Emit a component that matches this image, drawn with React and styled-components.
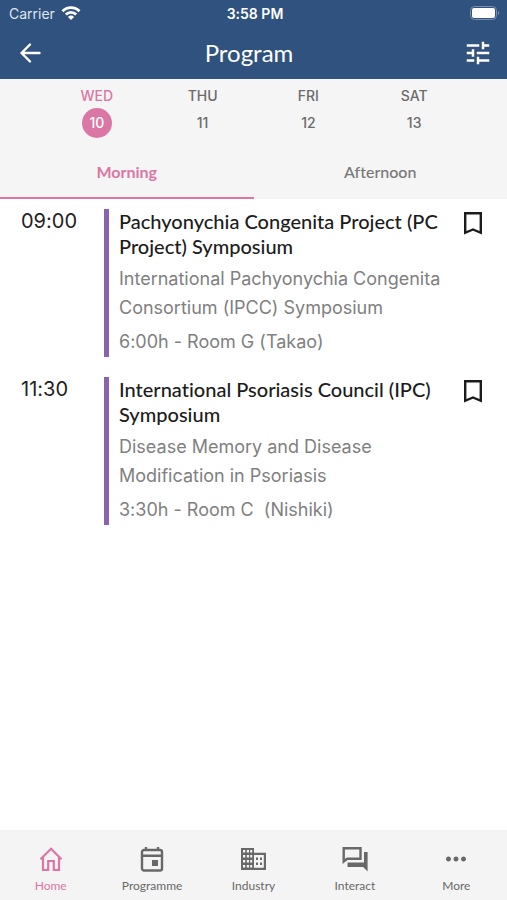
import React, { useState } from 'react';
import styled, { createGlobalStyle } from 'styled-components';
import { MdTune, MdMoreHoriz } from 'react-icons/md';

const days = [
  { name: 'WED', date: 10 },
  { name: 'THU', date: 11 },
  { name: 'FRI', date: 12 },
  { name: 'SAT', date: 13 },
];

const sessions = [
  {
    time: '09:00',
    title: 'Pachyonychia Congenita Project (PC Project) Symposium',
    description: 'International Pachyonychia Congenita Consortium (IPCC) Symposium',
    place: '6:00h - Room G (Takao)',
  },
  {
    time: '11:30',
    title: 'International Psoriasis Council (IPC) Symposium',
    description: 'Disease Memory and Disease Modification in Psoriasis',
    place: '3:30h - Room C  (Nishiki)',
  },
];

const WifiIcon = () => (
  <svg width="20" height="14" viewBox="0 0 20 14" fill="none" stroke="white" strokeWidth="2.8">
    <path d="M1.5 5.2a12 12 0 0 1 17 0M4.8 8.5a7.4 7.4 0 0 1 10.4 0" />
    <path d="M10 14l-3.1-3.1a4.4 4.4 0 0 1 6.2 0z" fill="white" stroke="none" />
  </svg>
);

const BatteryIcon = () => (
  <svg width="31" height="14" viewBox="0 0 31 14">
    <rect x="0.5" y="0.5" width="26" height="13" rx="4" fill="none" stroke="#7990b3" />
    <rect x="2" y="2" width="23" height="10" rx="2" fill="white" />
    <path d="M28 5c1.6.6 1.6 3.4 0 4z" fill="#7990b3" />
  </svg>
);

const BackIcon = () => (
  <svg
    width="24"
    height="24"
    viewBox="0 0 24 24"
    fill="none"
    stroke="currentColor"
    strokeWidth="2.4"
    strokeLinecap="round"
    strokeLinejoin="round"
  >
    <path d="M12 3.5L3.5 12l8.5 8.5M3.5 12h18" />
  </svg>
);

const BookmarkIcon = () => (
  <svg width="30" height="30" viewBox="0 0 30 30" fill="none" stroke="currentColor" strokeWidth="2.4">
    <path d="M7.2 4.2h15.6v19.6L15 20.5l-7.8 3.3z" />
  </svg>
);

const HomeIcon = () => (
  <svg width="28" height="28" viewBox="0 0 28 28" fill="none" stroke="currentColor" strokeWidth="2.2">
    <path d="M3.5 14.3L14 3.8l10.5 10.5M6 12v13h5.200v-9h5.6v9H22V12" />
  </svg>
);

const CalendarIcon = () => (
  <svg width="28" height="28" viewBox="0 0 28 28" fill="none" stroke="currentColor" strokeWidth="2.4">
    <rect x="4" y="5" width="20" height="20.5" rx="2" />
    <path d="M4 10.8h20M8 2v3M20 2v3" />
    <path d="M14 15h6v6h-6z" fill="currentColor" stroke="none" />
  </svg>
);

const BuildingIcon = () => (
  <svg width="28" height="28" viewBox="0 0 28 28" fill="currentColor" fillRule="evenodd">
    <path d="M2 3h13v4.7h12V25H2zM4 5v2.4h2.2V5zM7.8 5v2.4H10V5zM11.2 5v2.4h2V5zM4 10v2.4h2.2V10zM7.8 10v2.4H10V10zM11.2 10v2.4h2V10zM4 15v2.4h2.2V15zM7.8 15v2.4H10V15zM11.2 15v2.4h2V15zM4 20v2.4h2.2V20zM7.8 20v2.4H10V20zM11.2 20v2.4h2V20zM15 10v12.8h9.8V10z" />
    <path d="M17 12.5h2v2.500h-2zM21 12.5h2v2.500h-2zM17 17.5h2v2.500h-2zM21 17.5h2v2.500h-2z" />
  </svg>
);

const ChatIcon = () => (
  <svg width="28" height="28" viewBox="0 0 28 28" fill="none" stroke="currentColor" strokeWidth="2.4">
    <path d="M2.7 3.2h16.8v10.5H6.2l-3.5 2.8z" />
    <path d="M23 7h3.6v19.5L22.100 22H6.5v-4.5H23z" fill="currentColor" stroke="none" />
  </svg>
);

const links = [
  { label: 'Home', icon: <HomeIcon /> },
  { label: 'Programme', icon: <CalendarIcon /> },
  { label: 'Industry', icon: <BuildingIcon /> },
  { label: 'Interact', icon: <ChatIcon /> },
  { label: 'More', icon: <MdMoreHoriz size={30} /> },
];

const App = () => {
  const [day, setDay] = useState(10);
  const [period, setPeriod] = useState('Morning');

  return (
    <Page>
      <GlobalStyle />
      <Header>
        <StatusBar>
          <Carrier>
            Carrier <WifiIcon />
          </Carrier>
          <Clock>3:58 PM</Clock>
          <Battery>
            <BatteryIcon />
          </Battery>
        </StatusBar>
        <TitleBar>
          <IconButton aria-label="Back">
            <BackIcon />
          </IconButton>
          <Title>Program</Title>
          <IconButton aria-label="Filters">
            <MdTune size={30} />
          </IconButton>
        </TitleBar>
      </Header>
      <Filters>
        <Days>
          {days.map(({ name, date }) => (
            <Day key={date} $active={date === day} onClick={() => setDay(date)}>
              {name}
              <DayNumber $active={date === day}>{date}</DayNumber>
            </Day>
          ))}
        </Days>
        <Periods>
          {['Morning', 'Afternoon'].map(name => (
            <Period key={name} $active={name === period} onClick={() => setPeriod(name)}>
              {name}
            </Period>
          ))}
        </Periods>
      </Filters>
      <Sessions>
        {sessions.map(({ time, title, description, place }) => (
          <Session key={time}>
            <Time>{time}</Time>
            <Details>
              <SessionTitle>{title}</SessionTitle>
              <Description>{description}</Description>
              <Place>{place}</Place>
            </Details>
            <BookmarkButton aria-label="Bookmark">
              <BookmarkIcon />
            </BookmarkButton>
          </Session>
        ))}
      </Sessions>
      <BottomNav>
        {links.map(({ label, icon }) => (
          <NavLink key={label} href="#" $active={label === 'Home'}>
            <NavIcon>{icon}</NavIcon>
            {label}
          </NavLink>
        ))}
      </BottomNav>
    </Page>
  );
};

export default App;

const pink = '#db77a4';
const grey = '#6b6b6b';
const humanist = "Lato, 'Open Sans', sans-serif";

const GlobalStyle = createGlobalStyle`
  * {
    box-sizing: border-box;
  }

  body {
    margin: 0;
    background-color: white;
    font-family: Inter, 'Liberation Sans', sans-serif;
    font-variant-ligatures: none;
  }

  button {
    padding: 0;
    border: none;
    background: none;
    color: inherit;
    font: inherit;
    cursor: pointer;
  }
`;

const Page = styled.div`
  display: flex;
  flex-direction: column;
  min-height: 100vh;
`;

const Header = styled.header`
  background-color: #30527f;
  color: white;
`;

const StatusBar = styled.div`
  display: grid;
  grid-template-columns: 1fr auto 1fr;
  align-items: center;
  height: 26px;
  padding: 0 6px 0 9px;
  font-size: 14px;
`;

const Carrier = styled.div`
  display: flex;
  align-items: center;
  gap: 6px;
  color: #dfe6f0;
`;

const Clock = styled.div`
  font-weight: 600;
`;

const Battery = styled.div`
  display: flex;
  justify-content: flex-end;
`;

const TitleBar = styled.div`
  display: grid;
  grid-template-columns: 30px 1fr 40px;
  align-items: center;
  height: 53px;
  padding: 0 14px 0 15px;
`;

const IconButton = styled.button`
  display: flex;
  align-items: center;
  justify-content: center;
  justify-self: end;
  width: 30px;
  height: 30px;
`;

const Title = styled.h1`
  margin: 0;
  font-family: ${humanist};
  font-size: 24px;
  font-weight: 400;
  text-align: center;
`;

const Filters = styled.section`
  background-color: #f5f5f5;
`;

const Days = styled.div`
  display: grid;
  grid-template-columns: repeat(4, 1fr);
  padding: 8px 40px 0 44px;
`;

const Day = styled.button`
  && {
    display: flex;
    flex-direction: column;
    align-items: center;
    gap: 3px;
    color: ${({ $active }) => ($active ? pink : grey)};
    font-size: 14px;
    font-weight: 500;
    line-height: 18px;
  }
`;

const DayNumber = styled.span`
  width: 30px;
  border-radius: 50%;
  background-color: ${({ $active }) => ($active ? pink : 'transparent')};
  color: ${({ $active }) => ($active ? 'white' : grey)};
  line-height: 30px;
`;

const Periods = styled.div`
  display: grid;
  grid-template-columns: 1fr 1fr;
  margin-top: 8px;
`;

const Period = styled.button`
  && {
    height: 53px;
    border-bottom: 2px solid ${({ $active }) => ($active ? pink : 'transparent')};
    color: ${({ $active }) => ($active ? pink : '#777')};
    font-family: ${humanist};
    font-size: 16px;
    font-weight: ${({ $active }) => ($active ? 700 : 500)};
  }
`;

const Sessions = styled.main`
  display: flex;
  flex: 1;
  flex-direction: column;
  gap: 20px;
  padding: 10px 19px 20px 21px;
`;

const Session = styled.article`
  display: grid;
  grid-template-columns: 83px 1fr 30px;
`;

const Time = styled.div`
  color: #222;
  font-size: 20px;
  line-height: 25px;
`;

const Details = styled.div`
  padding: 0 13px 0 10px;
  border-left: 5px solid #8b62ae;
`;

const SessionTitle = styled.h2`
  margin: 0;
  color: #1c1c1c;
  font-family: ${humanist};
  font-size: 20px;
  font-weight: 500;
  line-height: 25px;
`;

const Description = styled.p`
  margin: 5px 0 4px;
  color: #808080;
  font-size: 18px;
  line-height: 29px;
`;

const Place = styled.p`
  margin: 0;
  color: #808080;
  font-size: 18px;
  line-height: 31px;
  white-space: pre-wrap;
`;

const BookmarkButton = styled.button`
  display: flex;
  align-self: start;
  color: #1c1c1c;
`;

const BottomNav = styled.nav`
  display: grid;
  grid-template-columns: repeat(5, 1fr);
  padding: 13px 0 6px;
  background-color: #f4f4f4;
`;

const NavLink = styled.a`
  display: flex;
  flex-direction: column;
  align-items: center;
  gap: 4px;
  color: ${({ $active }) => ($active ? pink : '#686868')};
  font-family: ${humanist};
  font-size: 12px;
  line-height: 16px;
  text-decoration: none;
`;

const NavIcon = styled.span`
  display: flex;
  align-items: center;
  height: 31px;
`;
